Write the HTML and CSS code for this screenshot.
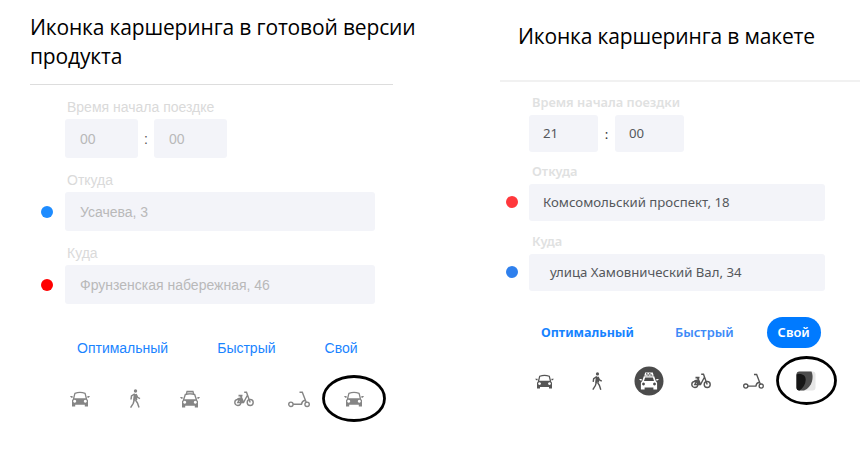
FILE: index.html
```html
<!DOCTYPE html>
<html lang="ru">
<head>
<meta charset="utf-8">
<title>Иконка каршеринга</title>
<link rel="stylesheet" href="styles.css">
</head>
<body>
<svg class="defs" width="0" height="0">
  <symbol id="car" viewBox="0 0 20 16">
    <path d="M3.500 8 4.900 2.400Q10 .4 15.100 2.400L16.500 8" fill="none" stroke="currentColor" stroke-width="1.300"/>
    <path d="M0 5h2.600v1.700H1.200zM20 5h-2.600v1.700h1.400z" fill="currentColor"/>
    <path fill-rule="evenodd" d="M3.500 7.200h13l1.500 2V15.500h-3.200V13.800H5.200V15.500H2V9.200zM4.700 8.800a1.500 1.500 0 1 0 .01 0zM15.300 8.800a1.500 1.500 0 1 0 .01 0z" fill="currentColor"/>
  </symbol>
  <symbol id="walk" viewBox="0 0 12 20">
    <circle cx="6.500" cy="2" r="1.700" fill="currentColor"/>
    <path d="M5.800 5 5 11.500M7 5.500 7.300 11" fill="none" stroke="currentColor" stroke-width="2"/>
    <path d="M5.800 4.800 2.500 7 2 10.500M7 5 8.600 8.300 11 9.600M5.200 11 4.300 14.300 1.600 18.600M6.500 11 8.500 14 10 18.600" fill="none" stroke="currentColor" stroke-width="1.500"/>
  </symbol>
  <symbol id="taxi" viewBox="0 0 20 18">
    <path d="M6.400 4 7 1.300h6l.6 2.700" fill="currentColor" fill-opacity=".45" stroke="currentColor" stroke-width="1.200"/>
    <path d="M3.500 10 5.300 4.500Q10 3.300 14.700 4.500L16.500 10" fill="none" stroke="currentColor" stroke-width="1.400"/>
    <path d="M0 7h2.600v1.700H1.200zM20 7h-2.600v1.700h1.400z" fill="currentColor"/>
    <path fill-rule="evenodd" d="M3.500 9.200h13l1.500 2V17.500h-3.200V15.800H5.200V17.500H2V11.200zM4.700 10.800a1.500 1.500 0 1 0 .01 0zM15.300 10.800a1.500 1.500 0 1 0 .01 0z" fill="currentColor"/>
  </symbol>
  <symbol id="bike" viewBox="0 0 20 16">
    <g fill="none" stroke="currentColor" stroke-width="1.400">
      <circle cx="3.800" cy="11.500" r="3"/><circle cx="16.200" cy="11.500" r="3"/>
      <path d="M10.200 1.200h2.300L16.200 11.500M13.300 4.500 9.500 11.500H3.800L6.500 6.500"/>
      <path d="M4.500 4.700h4M6.700 5 9.500 11.500M3.500 8Q7 6.500 8.500 12" stroke-width="1.700"/>
    </g>
  </symbol>
  <symbol id="scooter" viewBox="0 0 22 17">
    <g fill="none" stroke="currentColor" stroke-width="1.400">
      <circle cx="2.900" cy="13.300" r="2.200"/><circle cx="19.100" cy="13.300" r="2.200"/>
      <path d="M11.500 1.200h2.800L18.200 11.300M5.100 13.300h8.400Q14 9.800 17.200 9.300"/>
    </g>
  </symbol>
</svg>
<main class="board">
  <section class="panel ready">
    <h1 class="title">Иконка каршеринга в готовой версии<br>продукта</h1>
    <form class="form">
      <label class="label">Время начала поездке</label>
      <div class="row time"><div class="field short">00</div><span class="colon">:</span><div class="field short">00</div></div>
      <label class="label">Откуда</label>
      <div class="row"><i class="dot azure"></i><div class="field">Усачева, 3</div></div>
      <label class="label">Куда</label>
      <div class="row"><i class="dot red"></i><div class="field">Фрунзенская набережная, 46</div></div>
    </form>
    <nav class="tabs"><a class="tab">Оптимальный</a><a class="tab">Быстрый</a><a class="tab">Свой</a></nav>
    <div class="modes">
      <div class="mode"><svg width="20" height="16"><use href="#car"/></svg></div>
      <div class="mode"><svg width="12" height="20"><use href="#walk"/></svg></div>
      <div class="mode"><svg width="20" height="18"><use href="#taxi"/></svg></div>
      <div class="mode"><svg width="20" height="16"><use href="#bike"/></svg></div>
      <div class="mode"><svg width="22" height="17"><use href="#scooter"/></svg></div>
      <div class="mode"><svg width="20" height="16"><use href="#car"/></svg><svg class="ring" width="66" height="50" viewBox="0 0 66 50"><ellipse cx="33" cy="24.500" rx="30.500" ry="22"/></svg></div>
    </div>
  </section>
  <section class="panel mockup">
    <h1 class="title">Иконка каршеринга в макете</h1>
    <form class="form">
      <label class="label">Время начала поездки</label>
      <div class="row time"><div class="field short">21</div><span class="colon">:</span><div class="field short">00</div></div>
      <label class="label">Откуда</label>
      <div class="row"><i class="dot coral"></i><div class="field">Комсомольский проспект, 18</div></div>
      <label class="label">Куда</label>
      <div class="row"><i class="dot blue"></i><div class="field indent">улица Хамовнический Вал, 34</div></div>
    </form>
    <nav class="tabs"><a class="tab strong">Оптимальный</a><a class="tab">Быстрый</a><a class="tab active">Свой</a></nav>
    <div class="modes">
      <div class="mode"><svg width="19" height="15"><use href="#car"/></svg></div>
      <div class="mode"><svg width="12" height="19"><use href="#walk"/></svg></div>
      <div class="mode"><svg width="30" height="30" viewBox="0 0 30 30">
        <circle cx="15" cy="15" r="14.500" fill="#4b4b4b"/>
        <path d="M10.300 9.700 11.200 6.500h7.600l.9 3.200z" fill="#fff"/>
        <path d="M12 7.200h1.500v1.200H12zM15 7.200h1.500v1.200H15zM13.500 8.400H15v1.200h-1.500zM16.500 8.400H18v1.200h-1.500z" fill="#4b4b4b"/>
        <path fill-rule="evenodd" d="M5 13h2.700v1.500H6.500zM25 13h-2.700v1.500h1.200zM8.300 14.800l1.500-4.600h10.400l1.500 4.600 1.400 2V23.500h-3.700v-2h-8.800v2H6.900V16.800zM10 15h10l-1.100-3.400h-7.800zM9.500 16.600a1.400 1.400 0 1 0 .01 0zM20.500 16.600a1.400 1.400 0 1 0 .01 0z" fill="#fff"/>
      </svg></div>
      <div class="mode"><svg width="20" height="16"><use href="#bike"/></svg></div>
      <div class="mode"><svg width="21" height="17"><use href="#scooter"/></svg></div>
      <div class="mode"><svg width="20" height="20" viewBox="0 0 20 20">
        <rect x=".5" y=".5" width="19" height="19" rx="3" fill="#e6e6e6"/>
        <path d="M3.500 .5H15.500C18 6 16.500 16 8 19.500H3.500Q.5 19.500 .5 16.500V3.500Q.5 .5 3.500 .5z" fill="#4d4d4d"/>
        <path d="M.5 3.500C6 2 10 4.500 9.700 9C9.500 13.500 7 17 3.500 19.500Q.5 19.500 .5 16.500z" fill="#161616"/>
      </svg><svg class="ring" width="66" height="54" viewBox="0 0 66 54"><ellipse cx="33.500" cy="26.500" rx="29" ry="23"/></svg></div>
    </div>
  </section>
</main>
</body>
</html>
```
FILE: styles.css
```css
* { box-sizing: border-box; }
body { margin: 0; background: #fff; }
.defs { display: block; position: absolute; }
.board { display: flex; width: 864px; height: 476px; overflow: hidden; }
.panel { display: flex; flex-direction: column; flex: none; }
.ready { width: 500px; padding-left: 30px; font: 14px/18px "Liberation Sans", Arial, sans-serif; }
.mockup { width: 360px; font: 13.200px/18px "Noto Sans", sans-serif; }

.title { margin: 0; font: 400 21px/29px "Open Sans", "Noto Sans", sans-serif; letter-spacing: -.16px; color: #000; white-space: nowrap; }
.ready .title { width: 363px; height: 85px; padding-top: 13px; border-bottom: 1px solid #ddd; }
.mockup .title { height: 82px; padding: 22px 0 0 18px; border-bottom: 2px solid #f1f1f1; }

.form { display: flex; flex-direction: column; margin: 0; }
.ready .form { padding: 13px 0 0 35px; }
.mockup .form { padding: 11px 0 0 29px; }
.label { display: block; }
.ready .label { height: 21px; padding-left: 2px; color: #dadada; }
.mockup .label { height: 22px; padding-left: 3px; color: #dfe1e1; font-size: 12.800px; font-weight: 600; }
.row { display: flex; align-items: center; position: relative; }
.ready .row { height: 39px; margin-bottom: 13px; }
.mockup .row { height: 37px; margin-bottom: 11px; }
.mockup .time { margin-bottom: 10px; }
.field { display: flex; align-items: center; height: 100%; background: #f3f4f9; border-radius: 3px; white-space: nowrap; }
.ready .field { width: 310px; padding-left: 15px; color: #b9b9b9; }
.mockup .field { width: 296px; padding: 0 0 1px 14px; color: #55585c; }
.mockup .indent { padding-left: 21px; }
.ready .short { width: 73px; }
.mockup .short { width: 69px; }
.colon { width: 16px; text-align: center; color: #555; }
.mockup .colon { width: 17px; color: #333; }
.dot { position: absolute; left: -24px; width: 12px; height: 12px; border-radius: 50%; }
.mockup .dot { left: -23px; top: 12px; }
.azure { background: #1e8cff; }
.red { background: #f00; }
.coral { background: #ff383c; }
.blue { background: #2f80ed; }

.tabs { display: flex; align-items: center; color: #1a84ff; }
.ready .tabs { gap: 49px; height: 20px; margin: 21px 0 0 47px; }
.mockup .tabs { gap: 42px; height: 32px; margin: 14px 0 0 41px; font-size: 12.900px; font-weight: 600; color: #3d8af7; }
.mockup .strong { margin-right: -1px; padding-top: 1px; color: #1683ff; font-size: 12.500px; font-weight: 700; }
.mockup .active { display: flex; align-items: center; justify-content: center; width: 54px; height: 31px; margin-left: -9px; border-radius: 16px; background: #007aff; color: #fff; }

.modes { display: grid; }
.ready .modes { grid-template-columns: repeat(6, 54.800px); height: 40px; margin: 21px 0 0 22.600px; color: #858585; }
.mockup .modes { grid-template-columns: repeat(6, 52.400px); height: 40px; margin: 13px 0 0 18px; color: #555; }
.mode { display: flex; align-items: center; justify-content: center; position: relative; }
.ring { position: absolute; left: 50%; top: 50%; transform: translate(-50%, -50%); fill: none; stroke: #000; stroke-width: 2.800px; }
```
